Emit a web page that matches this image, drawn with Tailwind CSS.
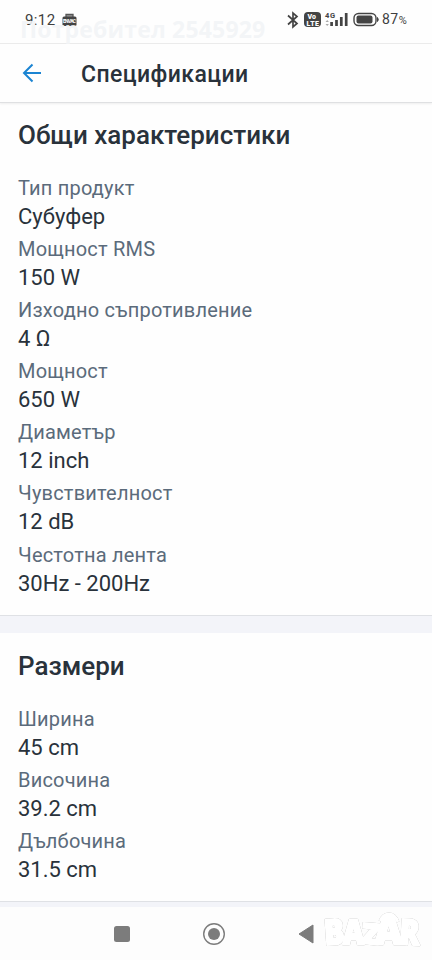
<!DOCTYPE html>
<html lang="bg">
<head>
<meta charset="utf-8">
<title>Спецификации</title>
<script src="https://cdn.jsdelivr.net/npm/@tailwindcss/browser@4"></script>
</head>
<body class="bg-[#fefefe] font-[Roboto,sans-serif] text-[#29323b]">
<div class="relative flex h-[960px] w-[432px] flex-col overflow-hidden">
  <header class="flex h-[44px] shrink-0 items-start justify-between border-b border-[#ebebeb] pt-[10px] pl-[25px]">
    <div class="flex items-center gap-[6px] text-[#3f3f3f]">
      <span class="text-[15px] leading-5 tracking-[0.4px]">9:12</span>
      <svg width="15" height="14" viewBox="0 0 15 14"><path d="M4 4V1.500h7V4" fill="#999" stroke="#555" stroke-width="1.300"/><rect x=".5" y="3.500" width="14" height="9.500" rx="1.500" fill="#444"/><text x="1" y="9.500" font-size="5" font-weight="700" fill="#fff" textLength="13">ENVAC</text></svg>
    </div>
    <div class="flex h-5 w-[146px] shrink-0 items-center whitespace-nowrap text-[#3f3f3f]">
      <svg class="shrink-0" width="94" height="18" viewBox="286 11 94 18" fill="none">
        <path d="M288 15.500l9 8-4 3.500V13l4 3.500-9 8" stroke="#444" stroke-width="1.700"/>
        <rect x="304" y="12" width="17" height="15" rx="4" fill="#444"/>
        <text x="307.500" y="19" font-size="7" font-weight="900" fill="#fff">Vo</text>
        <text x="306.500" y="25.500" font-size="7" font-weight="900" fill="#fff" textLength="12.500">LTE</text>
        <text x="325" y="17.500" font-size="7.500" font-weight="700" fill="#444" textLength="10">4G</text>
        <path d="M325.500 22l1.700-2 1.700 2zM325.500 24l1.700 2 1.700-2z" fill="#aaa"/>
        <path d="M331.600 26v-4M336.500 26v-6M341.300 26v-9M346.200 26V13" stroke="#444" stroke-width="2.700"/>
        <rect x="354" y="13.500" width="22" height="12" rx="4.500" stroke="#444" stroke-width="1.400"/>
        <rect x="356.500" y="15.500" width="16" height="8" rx="2" fill="#444"/>
        <path d="M377.500 17.500q1.500 2 0 4z" fill="#444" stroke="#444"/>
      </svg>
      <span class="ml-[2px] text-[14px] leading-5 tracking-[0.5px]">87<span class="text-[11px] tracking-normal">%</span></span>
    </div>
  </header>

  <nav class="flex h-[59px] shrink-0 items-center border-b border-[#dfe0e2] pl-[22px] shadow-[0_1px_2px_#eeeeee]">
    <svg width="20" height="20" viewBox="0 0 20 20" fill="none" stroke="#1b84d2" stroke-width="2"><path d="M19 10H2M10.500 1.500L2 10l8.500 8.500"/></svg>
    <h1 class="mt-[4px] ml-[39px] text-[23px] leading-7 font-medium tracking-[0.42px]">Спецификации</h1>
  </nav>

  <main class="flex flex-1 flex-col">
    <section class="h-[513px] border-b border-[#dfe1e5] px-[18px] pt-[16px]">
      <h2 class="text-[26px] leading-8 font-medium">Общи характеристики</h2>
      <dl class="mt-[21.5px] leading-[30px] [&_dd]:-mt-[2px] [&_dd]:h-[32.2px] [&_dd]:text-[22px] [&_dt]:h-[31px] [&_dt]:text-[20px] [&_dt]:tracking-[0.2px] [&_dt]:text-[#5b6b7b]">
        <dt>Тип продукт</dt><dd>Субуфер</dd>
        <dt>Мощност RMS</dt><dd>150 W</dd>
        <dt>Изходно съпротивление</dt><dd>4 Ω</dd>
        <dt>Мощност</dt><dd>650 W</dd>
        <dt>Диаметър</dt><dd>12 inch</dd>
        <dt>Чувствителност</dt><dd>12 dB</dd>
        <dt>Честотна лента</dt><dd>30Hz - 200Hz</dd>
      </dl>
    </section>
    <div class="h-[17px] bg-[#f3f4f9]"></div>
    <section class="h-[269px] border-b border-[#dfe1e5] px-[18px] pt-[17px]">
      <h2 class="text-[26px] leading-8 font-medium">Размери</h2>
      <dl class="mt-[21.500px] leading-[30px] [&_dd]:-mt-[2px] [&_dd]:h-[32.2px] [&_dd]:text-[22px] [&_dt]:h-[31px] [&_dt]:text-[20px] [&_dt]:tracking-[0.2px] [&_dt]:text-[#5b6b7b]">
        <dt>Ширина</dt><dd>45 cm</dd>
        <dt>Височина</dt><dd>39.2 cm</dd>
        <dt>Дълбочина</dt><dd>31.5 cm</dd>
      </dl>
    </section>
    <div class="h-[5px] bg-[#f3f4f9]"></div>
  </main>

  <footer class="flex h-[53px] shrink-0 items-center bg-[#fdfdfd] pl-[114px]">
    <svg class="block" width="16" height="16"><rect width="16" height="16" rx="2.500" fill="#7c7c7c"/></svg>
    <svg class="ml-[73px]" width="22" height="22"><circle cx="11" cy="11" r="10.300" fill="none" stroke="#7c7c7c" stroke-width="1.400"/><circle cx="11" cy="11" r="6" fill="#7c7c7c"/></svg>
    <svg class="ml-[73px]" width="16" height="20"><path d="M1 10L15 1v18z" fill="#7c7c7c" stroke="#7c7c7c" stroke-linejoin="round"/></svg>
  </footer>

  <div class="absolute top-[13px] left-[20px] font-['Open_Sans',sans-serif] text-[23px] leading-8 font-bold tracking-[0.17px] whitespace-nowrap text-[#f2f4f6]/90">Потребител 2545929</div>
  <svg class="absolute top-[900px] left-[316px] drop-shadow-[0.5px_0.8px_0.7px_#a8a8a8]" width="116" height="60" viewBox="316 900 116 60" font-family="Open Sans, sans-serif" font-weight="800" fill="#fff" stroke="#fff" stroke-width="2.500" stroke-linejoin="round">
    <text x="325" y="945" font-size="35" textLength="20" lengthAdjust="spacingAndGlyphs" transform="rotate(-4 325 945)">B</text>
    <text x="343" y="943.500" font-size="33" textLength="21" lengthAdjust="spacingAndGlyphs">A</text>
    <text x="361" y="943" font-size="28" textLength="18" lengthAdjust="spacingAndGlyphs" transform="rotate(5 362 944)">Z</text>
    <text x="375" y="944" font-size="38" textLength="27" lengthAdjust="spacingAndGlyphs">A</text>
    <text x="399" y="944" font-size="35" textLength="20" lengthAdjust="spacingAndGlyphs" transform="rotate(3 399 943)">R</text>
    <path d="M380 921q3-7 9-7t9 8" fill="none" stroke-width="3"/>
  </svg>
</div>
</body>
</html>
